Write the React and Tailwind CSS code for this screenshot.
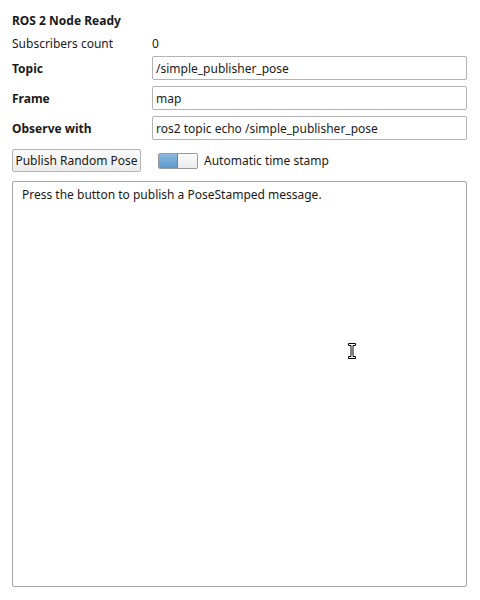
import React from "react";

function Field({ label, value }) {
  return (
    <div className="flex items-center h-[24px]">
      <div className="w-[140px] font-bold pt-[2px]">{label}</div>
      <div className="flex-1 h-[24px] border border-[#b4b4b4] rounded-[2px] bg-white px-[3px] pt-[2px] flex items-center">
        {value}
      </div>
    </div>
  );
}

function IBeam() {
  return (
    <svg
      className="absolute left-[347px] top-[342px]"
      width="10"
      height="18"
      viewBox="0 0 10 18"
    >
      <path
        d="M1.5 1.5h7v2h-2.5v11h2.5v2h-7v-2h2.5v-11h-2.5z"
        fill="#fff"
        stroke="#000"
        strokeWidth="1"
      />
    </svg>
  );
}

export default function App() {
  return (
    <div
      className="relative w-[480px] h-[600px] bg-white text-[12px] text-[#1a1a1a] pl-[12px] pr-[13px] pt-[12px]"
      style={{ fontFamily: '"Noto Sans", "Open Sans", sans-serif' }}
    >
      <div className="font-bold leading-[18px] h-[18px]">ROS 2 Node Ready</div>
      <div className="flex items-center h-[18px] mt-[5px]">
        <div className="w-[140px]">Subscribers count</div>
        <div>0</div>
      </div>
      <div className="flex flex-col gap-[6px] mt-[3px]">
        <Field label="Topic" value="/simple_publisher_pose" />
        <Field label="Frame" value="map" />
        <Field label="Observe with" value="ros2 topic echo /simple_publisher_pose" />
      </div>
      <div className="flex items-center mt-[9px] h-[23px]">
        <button className="h-[23px] w-[129px] border border-[#b4b4b4] rounded-[2px] bg-gradient-to-b from-[#fafafa] to-[#ececec] text-[12px] pt-[1px] flex items-center justify-center">
          Publish Random Pose
        </button>
        <div className="ml-[17px] w-[40px] h-[16px] border border-[#9a9a9a] rounded-[2px] flex overflow-hidden">
          <div className="w-[19px] h-full bg-gradient-to-b from-[#8ab8e0] to-[#5c98cc] border-r border-[#5a86ad]" />
          <div className="flex-1 h-full bg-gradient-to-b from-[#fbfbfb] to-[#ececec]" />
        </div>
        <div className="ml-[6px] pt-[1px]">Automatic time stamp</div>
      </div>
      <div className="mt-[9px] h-[406px] border border-[#a6a6a6] rounded-[2px] px-[9px] pt-[4px]">
        Press the button to publish a PoseStamped message.
      </div>
      <IBeam />
    </div>
  );
}
